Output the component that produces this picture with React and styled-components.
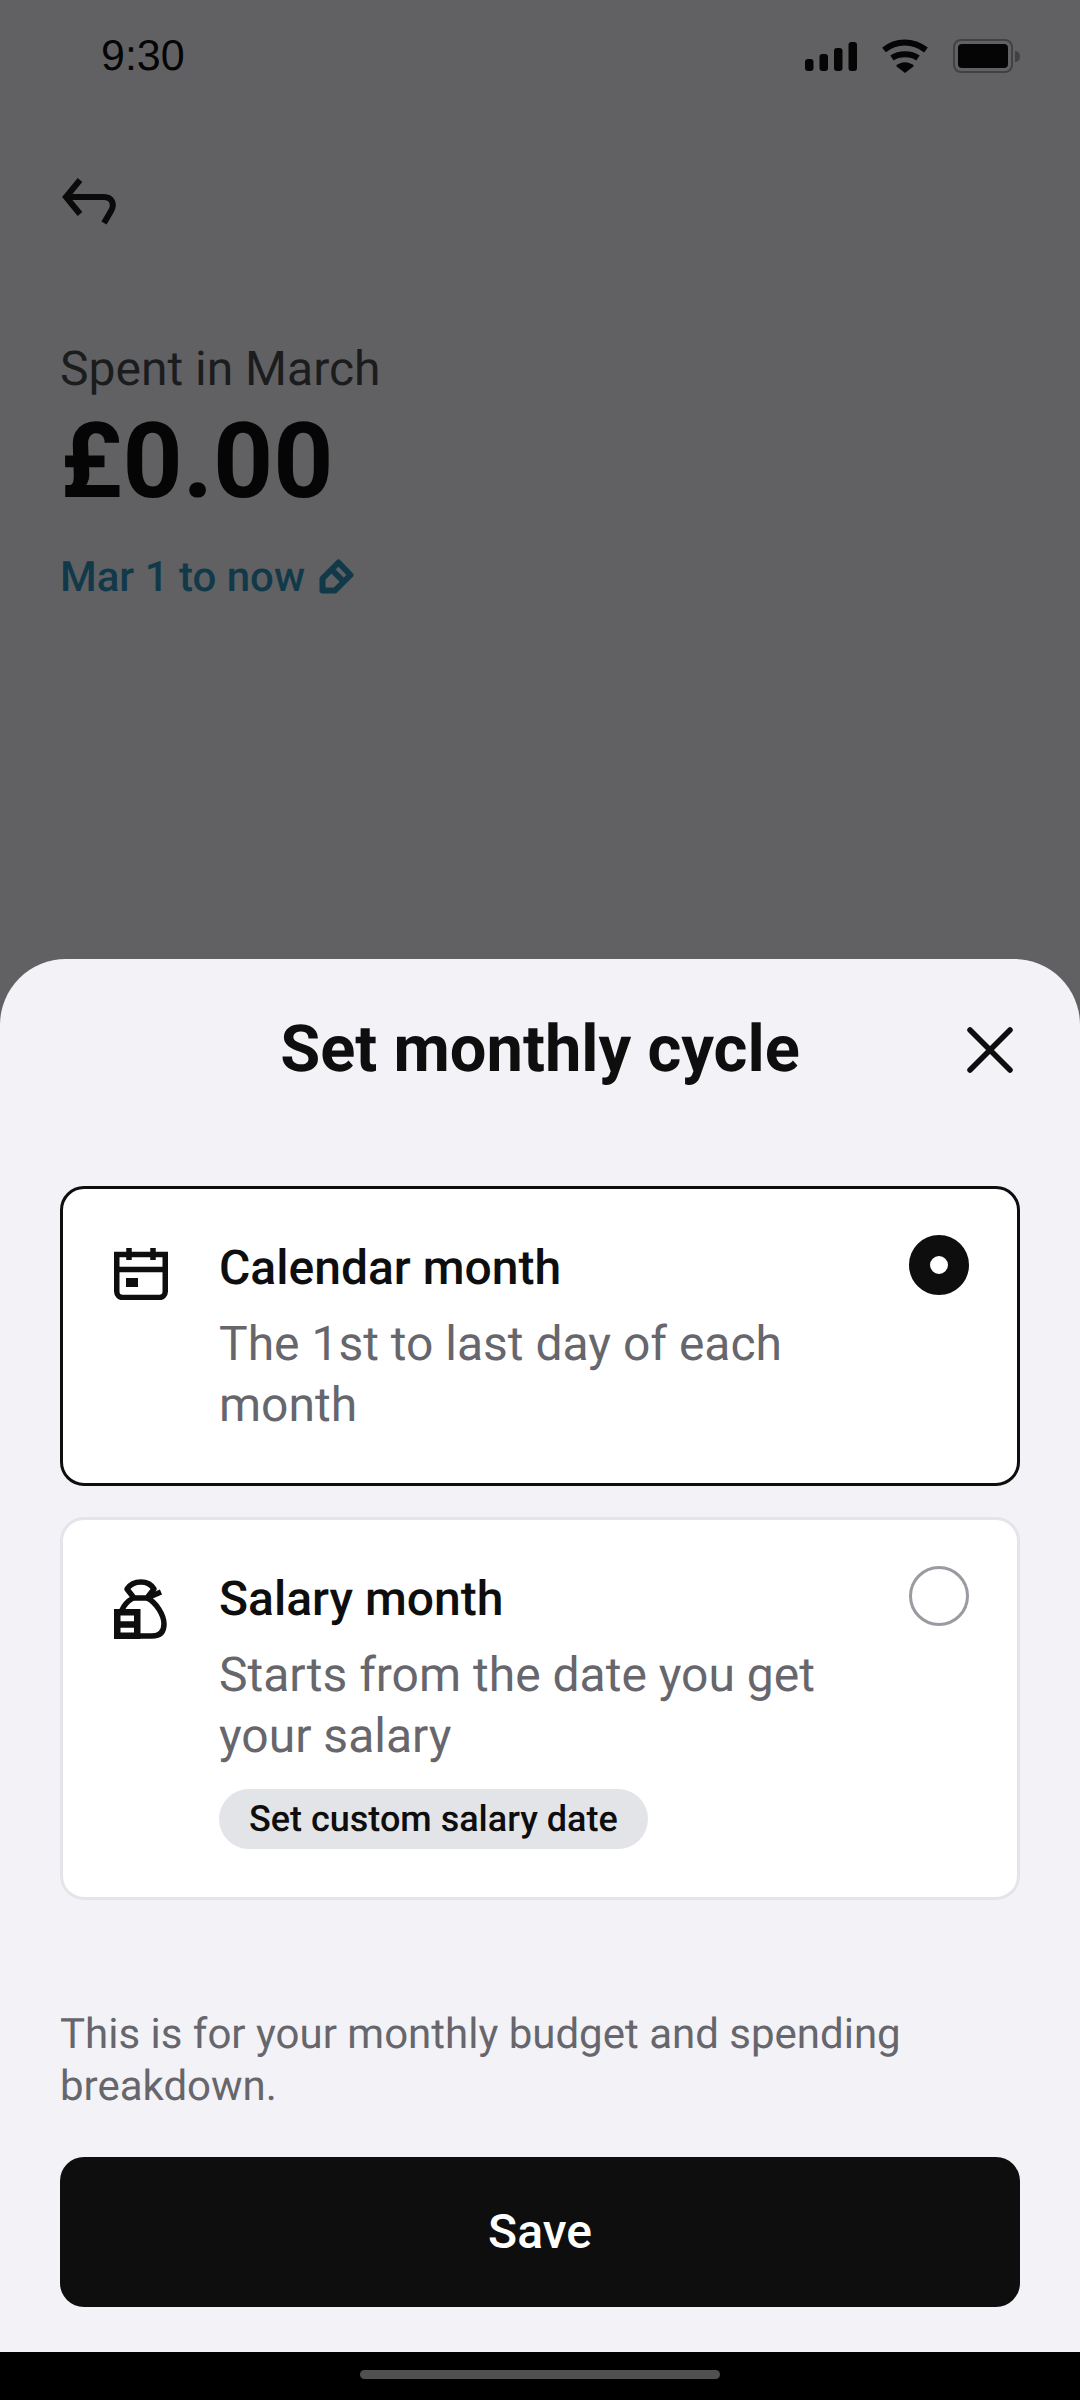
import React from "react";
import styled, { createGlobalStyle } from "styled-components";

const GlobalStyle = createGlobalStyle`
    html, body {
        margin: 0;
        padding: 0;
        background: #616163;
        text-rendering: geometricPrecision;
    }
    * {
        box-sizing: border-box;
    }
`;

const options = [
    {
        id: "calendar",
        title: "Calendar month",
        text: "The 1st to last day of each month",
        selected: true,
    },
    {
        id: "salary",
        title: "Salary month",
        text: "Starts from the date you get your salary",
        action: "Set custom salary date",
    },
];

const CalendarIcon = () => (
    <svg width="54" height="52" viewBox="0 0 54 52" fill="none" stroke="#0e0e0f" strokeWidth="5.5">
        <path d="M2.750 6.500h48.500v37a6 6 0 0 1-6 6H8.750a6 6 0 0 1-6-6z" />
        <path d="M3 21.500h48M15 0v12M39 0v12" />
        <rect x="12" y="30" width="12" height="9" fill="#0e0e0f" stroke="none" />
    </svg>
);

const MoneyBagIcon = () => (
    <svg width="54" height="60" viewBox="0 0 54 60" fill="none" stroke="#0e0e0f" strokeWidth="5.5">
        <path d="M13 10C17 4 22 3 27 3s10 2 13 7l-7 9H20z" strokeLinejoin="round" />
        <path d="M33 19l14-6M19 19C14 22 10 26 8 31M33 19c9 4 17 17 17 26 0 9-5 12-12 12H26" />
        <path d="M3.250 33.250h20v23.500h-20zM3.250 45.500h20" strokeWidth="6.500" />
    </svg>
);

const App = () => {
    return (
        <Screen>
            <GlobalStyle />
            <Backdrop>
                <StatusBar>
                    <Clock>9:30</Clock>
                    <StatusIcons>
                        <svg width="52" height="29" viewBox="0 0 52 29" fill="#050505">
                            <rect x="0" y="17" width="8.500" height="12" rx="3" />
                            <rect x="14.500" y="12" width="8.500" height="17" rx="3" />
                            <rect x="29" y="6" width="8.500" height="23" rx="3" />
                            <rect x="43.500" y="0" width="8.500" height="29" rx="3" />
                        </svg>
                        <svg width="46" height="34" viewBox="0 0 46 34" fill="none" stroke="#050505" strokeWidth="6">
                            <path d="M2 11C14 1 31 1 44 11M10 19c7-5 19-5 26 0" />
                            <path d="M14 27c5-5 13-5 18 0l-9 7z" fill="#050505" stroke="none" />
                        </svg>
                        <Battery>
                            <BatteryFill />
                        </Battery>
                    </StatusIcons>
                </StatusBar>
                <BackButton>
                    <svg width="58" height="50" viewBox="0 0 58 50" fill="none" stroke="#0a0a0a" strokeWidth="6">
                        <path d="M20 4 6 21l14 17" />
                        <path d="M6 21h38c8 0 11 7 7 14l-7 12" />
                    </svg>
                </BackButton>
                <Summary>
                    <SpentLabel>Spent in March</SpentLabel>
                    <Amount>£0.00</Amount>
                    <RangeLink>
                        Mar 1 to now
                        <svg width="36" height="36" viewBox="0 0 36 36" fill="none" stroke="#12394a" strokeWidth="6">
                            <path d="M3.500 20.500 19.500 4.500 31.500 17 16 32.500H3.500z" strokeLinejoin="round" />
                            <path d="M12 11l14 14" />
                        </svg>
                    </RangeLink>
                </Summary>
            </Backdrop>
            <Sheet>
                <SheetHeader>
                    <SheetTitle>Set monthly cycle</SheetTitle>
                    <CloseButton>
                        <svg width="46" height="46" viewBox="0 0 46 46" stroke="#0e0e0f" strokeWidth="5.5" strokeLinecap="round">
                            <path d="M3 3l40 40M43 3 3 43" />
                        </svg>
                    </CloseButton>
                </SheetHeader>
                <OptionList>
                    {options.map((option) => (
                        <OptionCard key={option.id} $selected={option.selected}>
                            <OptionIcon>
                                {option.id === "calendar" ? <CalendarIcon /> : <MoneyBagIcon />}
                            </OptionIcon>
                            <OptionBody>
                                <OptionTitle>{option.title}</OptionTitle>
                                <OptionText>{option.text}</OptionText>
                                {option.action && <ActionPill>{option.action}</ActionPill>}
                            </OptionBody>
                            <Radio $selected={option.selected} />
                        </OptionCard>
                    ))}
                </OptionList>
                <Note>This is for your monthly budget and spending breakdown.</Note>
                <SaveButton>Save</SaveButton>
            </Sheet>
            <NavBar>
                <HomeIndicator />
            </NavBar>
        </Screen>
    );
};

const Screen = styled.div`
    display: flex;
    flex-direction: column;
    width: 1080px;
    height: 2400px;
    overflow: hidden;
    background: #616163;
    font-family: Roboto, sans-serif;
`;

const Backdrop = styled.div`
    display: flex;
    flex-direction: column;
    height: 959px;
    padding: 0 60px;
`;

const StatusBar = styled.div`
    display: flex;
    justify-content: space-between;
    align-items: center;
    height: 112px;
    padding: 0 0 0 41px;
`;

const Clock = styled.span`
    font-family: "Liberation Sans", sans-serif;
    font-size: 43px;
    color: #050505;
`;

const StatusIcons = styled.div`
    display: flex;
    align-items: center;
    gap: 25px;
    margin-right: 7px;
`;

const Battery = styled.div`
    position: relative;
    display: flex;
    width: 60px;
    height: 34px;
    padding: 3px 3px;
    border: 2px solid #414143;
    border-radius: 8px;

    &::after {
        content: "";
        position: absolute;
        right: -9px;
        top: 10px;
        width: 5px;
        height: 11px;
        border-radius: 0 5px 5px 0;
        background: #414143;
    }
`;

const BatteryFill = styled.div`
    flex: 1;
    border-radius: 4px;
    background: #050505;
`;

const BackButton = styled.div`
    display: flex;
    height: 50px;
    margin-top: 64px;
`;

const Summary = styled.div`
    display: flex;
    flex-direction: column;
    align-items: flex-start;
    margin-top: 116px;
`;

const SpentLabel = styled.div`
    font-size: 48px;
    line-height: 54px;
    color: #1b1c1e;
`;

const Amount = styled.div`
    margin-top: 11px;
    font-size: 105px;
    font-weight: 700;
    line-height: 110px;
    color: #050505;
`;

const RangeLink = styled.div`
    display: flex;
    align-items: center;
    gap: 14px;
    margin-top: 37px;
    font-size: 42px;
    font-weight: 500;
    line-height: 48px;
    color: #12394a;

    svg {
        margin-bottom: 5px;
    }
`;

const Sheet = styled.div`
    display: flex;
    flex-direction: column;
    flex: 1;
    padding: 0 60px;
    border-radius: 66px 66px 0 0;
    background: #f2f2f7;
`;

const SheetHeader = styled.div`
    position: relative;
    display: flex;
    justify-content: center;
    align-items: center;
    height: 178px;
    padding-top: 2px;
`;

const SheetTitle = styled.h2`
    margin: 0;
    font-size: 65px;
    font-weight: 700;
    line-height: 70px;
    color: #0e0e0f;
`;

const CloseButton = styled.div`
    position: absolute;
    right: 7px;
    top: 68px;
    display: flex;
`;

const OptionList = styled.div`
    display: flex;
    flex-direction: column;
    gap: 31px;
    margin-top: 49px;
`;

const OptionCard = styled.div`
    display: flex;
    align-items: flex-start;
    padding: 49px 48px 48px 51px;
    border: ${(props) => (props.$selected ? "3px solid #0e0e0f" : "3px solid #e4e4ea")};
    border-radius: 24px;
    background: #fff;
`;

const OptionIcon = styled.div`
    display: flex;
    width: 54px;
    margin-top: 10px;
    margin-right: 51px;
`;

const OptionBody = styled.div`
    display: flex;
    flex: 1;
    flex-direction: column;
    align-items: flex-start;
`;

const OptionTitle = styled.div`
    font-size: 48px;
    font-weight: 500;
    line-height: 60px;
    color: #0e0e0f;
`;

const OptionText = styled.div`
    max-width: 600px;
    margin-top: 15px;
    font-size: 48px;
    line-height: 61px;
    color: #66666c;
`;

const ActionPill = styled.div`
    margin-top: 23px;
    padding: 0 30px;
    border-radius: 30px;
    background: #e3e4e8;
    font-size: 36px;
    font-weight: 500;
    line-height: 60px;
    color: #0e0e0f;
`;

const Radio = styled.div`
    flex-shrink: 0;
    width: 60px;
    height: 60px;
    margin-top: -3px;
    border-radius: 50%;
    border: ${(props) => (props.$selected ? "21px solid #0e0e0f" : "3px solid #9a9aa0")};
    background: #fff;
`;

const Note = styled.p`
    margin: 109px 0 0;
    font-size: 42px;
    line-height: 52px;
    color: #66666c;
`;

const SaveButton = styled.button`
    height: 150px;
    margin-top: 44px;
    padding: 0 0 2px;
    border: 0;
    border-radius: 24px;
    background: #0e0e0f;
    font-family: Roboto, sans-serif;
    font-size: 48px;
    font-weight: 500;
    color: #fff;
`;

const NavBar = styled.div`
    display: flex;
    justify-content: center;
    height: 48px;
    padding-top: 18px;
    background: #000;
`;

const HomeIndicator = styled.div`
    width: 360px;
    height: 9px;
    border-radius: 5px;
    background: #505050;
`;

export default App;
